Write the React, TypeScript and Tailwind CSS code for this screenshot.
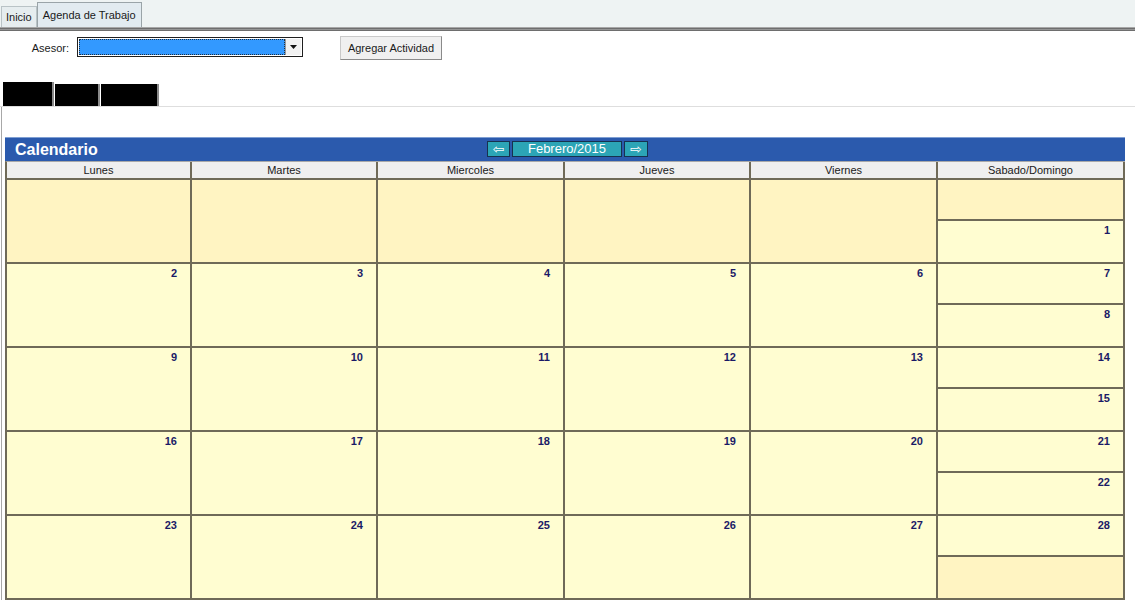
import type { ReactNode } from 'react';

const DAYS = ['Lunes', 'Martes', 'Miercoles', 'Jueves', 'Viernes', 'Sabado/Domingo'];

// each week: five weekdays then [sabado, domingo]; null = outside the month
const WEEKS: { weekdays: (number | null)[]; weekend: [number | null, number | null] }[] = [
  { weekdays: [null, null, null, null, null], weekend: [null, 1] },
  { weekdays: [2, 3, 4, 5, 6], weekend: [7, 8] },
  { weekdays: [9, 10, 11, 12, 13], weekend: [14, 15] },
  { weekdays: [16, 17, 18, 19, 20], weekend: [21, 22] },
  { weekdays: [23, 24, 25, 26, 27], weekend: [28, null] },
];

const COLS = 'grid-cols-[185px_186px_187px_186px_187px_187px]';

function DayNum({ n }: { n: number | null }) {
  if (n === null) return null;
  return <div className="pr-[13px] pt-[3px] text-right text-[11px] font-bold leading-[13px] text-[#1b1a66]">{n}</div>;
}

function Cell({ n, className }: { n: number | null; className?: string }) {
  return (
    <div className={`${n === null ? 'bg-[#fff4c2]' : 'bg-[#fffdd1]'} ${className ?? ''}`}>
      <DayNum n={n} />
    </div>
  );
}

function NavBox({ children, className }: { children: ReactNode; className?: string }) {
  return (
    <div className={`flex h-[16px] items-center justify-center border border-[#17324f] bg-[#2ca5b6] text-white ${className ?? ''}`}>
      {children}
    </div>
  );
}

export default function App() {
  return (
    <div className="min-h-[600px] bg-white text-[#1a1a1a]" style={{ fontFamily: '"Liberation Sans", Arial, sans-serif' }}>
      {/* tab strip */}
      <div className="flex h-[27px] items-end bg-[#eef3f3] pl-[1px]">
        <div className="flex h-[21px] items-center border border-b-0 border-[#b9c3c6] bg-[#e6edef] px-[4px] text-[11px]">Inicio</div>
        <div className="flex h-[25px] items-start border border-b-0 border-[#9aa4a8] bg-[#e2ebf0] px-[5px] pt-[4px] text-[11px]">
          Agenda de Trabajo
        </div>
      </div>
      <div className="h-[1px] bg-[#a7a7a7]" />
      <div className="h-[1px] bg-[#6e6e6e]" />
      <div className="h-[1px] bg-[#959595]" />
      <div className="h-[1px] bg-[#6e6e6e]" />

      {/* toolbar */}
      <div className="flex h-[50px] items-start pt-[6px]">
        <div className="mt-[3px] w-[77px] pr-[8px] text-right text-[11px]">Asesor:</div>
        <div className="flex h-[20px] w-[226px] border border-[#1f1f1f] bg-white p-[1px]">
          <div className="flex-1 border border-dotted border-[#203040] bg-[#3399ff]" />
          <div className="flex w-[16px] items-center justify-center border-l border-[#9a9a9a] bg-[#f1f1f1]">
            <svg width="7" height="4" viewBox="0 0 7 4">
              <path d="M0 0h7L3.5 4z" fill="#111" />
            </svg>
          </div>
        </div>
        <button className="ml-[37px] -mt-[1px] h-[24px] w-[102px] border border-[#c9c9c9] border-b-[#8a8a8a] border-r-[#8a8a8a] bg-[#f0f0f0] text-[11px] text-[#1a1a1a]">
          Agregar Actividad
        </button>
      </div>

      {/* redacted sub tabs */}
      <div className="flex h-[25px] items-end pl-[3px]">
        <div className="h-[24px] w-[51px] border-r-2 border-[#8a8a8a] bg-black" />
        <div className="ml-[1px] h-[22px] w-[45px] border-r-2 border-[#8a8a8a] bg-black" />
        <div className="ml-[1px] h-[22px] w-[58px] border-r-2 border-[#8a8a8a] bg-black" />
      </div>
      <div className="h-[1px] bg-[#dedede]" />

      {/* calendar area */}
      <div className="ml-[1px] border-l border-[#a8a8a8] pt-[30px]">
        <div className="ml-[3px] w-[1120px]">
          {/* title bar */}
          <div className="relative flex h-[24px] items-center border-t border-[#7f9fd3] bg-[#2b5aad]">
            <span className="pl-[10px] text-[16px] font-bold text-white">Calendario</span>
            <div className="absolute left-[482px] top-[3px] flex gap-[2px]">
              <NavBox className="w-[23px] text-[14px]">
                <span style={{ fontFamily: '"DejaVu Sans", sans-serif' }}>⇦</span>
              </NavBox>
              <NavBox className="w-[110px] text-[13px]">Febrero/2015</NavBox>
              <NavBox className="w-[24px] text-[14px]">
                <span style={{ fontFamily: '"DejaVu Sans", sans-serif' }}>⇨</span>
              </NavBox>
            </div>
          </div>

          {/* header */}
          <div className={`grid ${COLS} border-l-2 border-t border-[#6f6a58] border-t-[#a9a9a9] bg-[#efefef]`}>
            {DAYS.map((d) => (
              <div key={d} className="flex h-[18px] items-center justify-center border-b-2 border-r-2 border-[#6f6a58] text-[11px]">
                {d}
              </div>
            ))}
          </div>

          {/* weeks */}
          {WEEKS.map((w, i) => (
            <div key={i} className={`grid h-[84px] ${COLS} border-l-2 border-[#6f6a58]`}>
              {w.weekdays.map((n, j) => (
                <Cell key={j} n={n} className="border-b-2 border-r-2 border-[#6f6a58]" />
              ))}
              <div className="flex flex-col border-b-2 border-r-2 border-[#6f6a58]">
                <Cell n={w.weekend[0]} className="h-[41px] border-b-2 border-[#6f6a58]" />
                <Cell n={w.weekend[1]} className="flex-1" />
              </div>
            </div>
          ))}
        </div>
      </div>
    </div>
  );
}
